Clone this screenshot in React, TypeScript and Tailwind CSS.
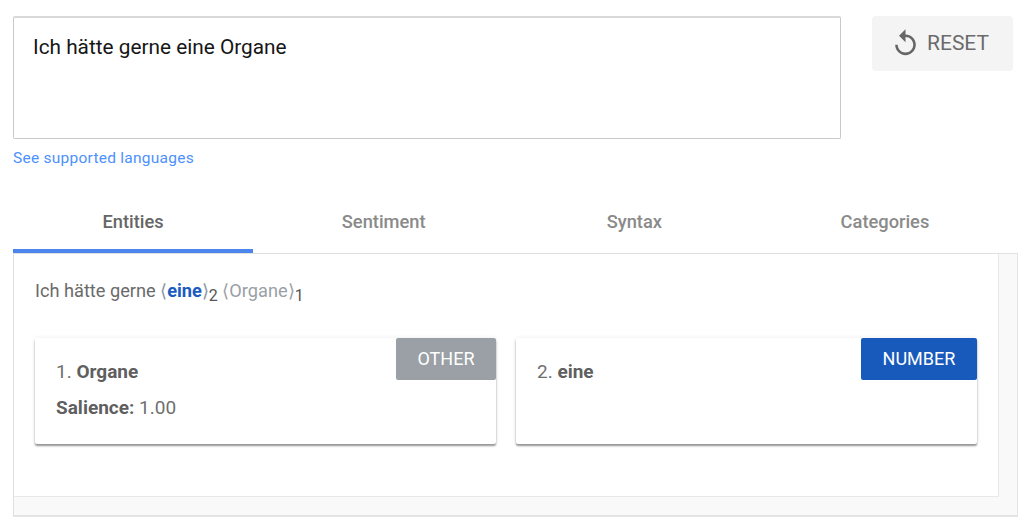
const tabs = ['Entities', 'Sentiment', 'Syntax', 'Categories']

function EntityCard({ index, name, salience, type, badgeClass }: { index: number; name: string; salience?: string; type: string; badgeClass: string }) {
  return (
    <div className="relative h-[106px] w-[461px] rounded-[2px] bg-white pl-[21px] pt-[22px] text-[19px] leading-[24px] text-[#6f6f6f] shadow-[0_2px_2px_rgba(0,0,0,0.4),0_0_5px_rgba(0,0,0,0.08)]">
      <div>
        {index}. <b className="font-bold text-[#5f5f5f]">{name}</b>
      </div>
      {salience && (
        <div className="mt-[12px]">
          <b className="font-bold text-[#5f5f5f]">Salience:</b> {salience}
        </div>
      )}
      <div className={`absolute right-0 top-0 flex h-[42px] items-center justify-center rounded-[2px] text-[18px] text-white ${badgeClass}`}>
        {type}
      </div>
    </div>
  )
}

export default function App() {
  return (
    <div className="h-[524px] w-[1024px] overflow-hidden bg-white pl-[13px] pt-[16px] font-['Roboto',sans-serif]">
      <div className="flex items-start">
        <div className="h-[123px] w-[828px] rounded-[2px] border border-[#c9c9c9] border-t-2 border-t-[#d9d9d9] pl-[19px] pt-[15px] text-[20.8px] leading-[28px] text-[#161616]">
          Ich hätte gerne eine Organe
        </div>
        <button className="ml-[31px] flex h-[55px] w-[141px] items-center rounded-[4px] bg-[#f4f4f4] pl-[18px] text-[21px] text-[#6b6b6b]">
          <svg viewBox="0 0 24 24" className="h-[31px] w-[31px] fill-[#666]">
            <path d="M12 5V1L7 6l5 5V7c3.31 0 6 2.69 6 6s-2.69 6-6 6-6-2.69-6-6H4c0 4.42 3.58 8 8 8s8-3.58 8-8-3.58-8-8-8z" />
          </svg>
          <span className="ml-[6px]">RESET</span>
        </button>
      </div>

      <a className="mt-[9px] block text-[15.5px] leading-[20px] tracking-[0.25px] text-[#4d90fe]">See supported languages</a>

      <div className="mt-[29px] flex w-[992px] justify-between">
        {tabs.map((tab, i) => (
          <div
            key={tab}
            className={`h-[56px] w-[240px] border-b-4 pt-[13px] text-center text-[18.3px] font-medium leading-[24px] ${
              i === 0 ? 'border-[#4a86ee] text-[#666]' : 'border-transparent text-[#8a8a8a]'
            }`}
          >
            {tab}
          </div>
        ))}
      </div>

      <div className="h-[264px] w-[1005px] border-b-2 border-l border-r border-t border-b-[#e4e4e4] border-l-[#e0e0e0] border-r-[#e4e4e4] border-t-[#e0e0e0] bg-[#f9f9f9]">
        <div className="h-[243px] w-[985px] border-b border-r border-[#e8e8e8] bg-white pl-[21px] pt-[25px]">
          <div className="text-[18.2px] leading-[24px] text-[#6a6a6a]">
            Ich hätte gerne{' '}
            <span className="text-[#1a5bbf]">
              <span className="text-[#8a94a6]">⟨</span>
              <b className="font-bold">eine</b>
              <span className="text-[#8a94a6]">⟩</span>
            </span>
            <sub className="text-[16px] text-[#555]">2</sub>{' '}
            <span className="text-[#9aa0a6]">⟨Organe⟩</span>
            <sub className="text-[16px] text-[#555]">1</sub>
          </div>
          <div className="mt-[35px] flex gap-[20px]">
            <EntityCard index={1} name="Organe" salience="1.00" type="OTHER" badgeClass="w-[100px] bg-[#9aa0a6]" />
            <EntityCard index={2} name="eine" type="NUMBER" badgeClass="w-[116px] bg-[#185abc]" />
          </div>
        </div>
      </div>
    </div>
  )
}
